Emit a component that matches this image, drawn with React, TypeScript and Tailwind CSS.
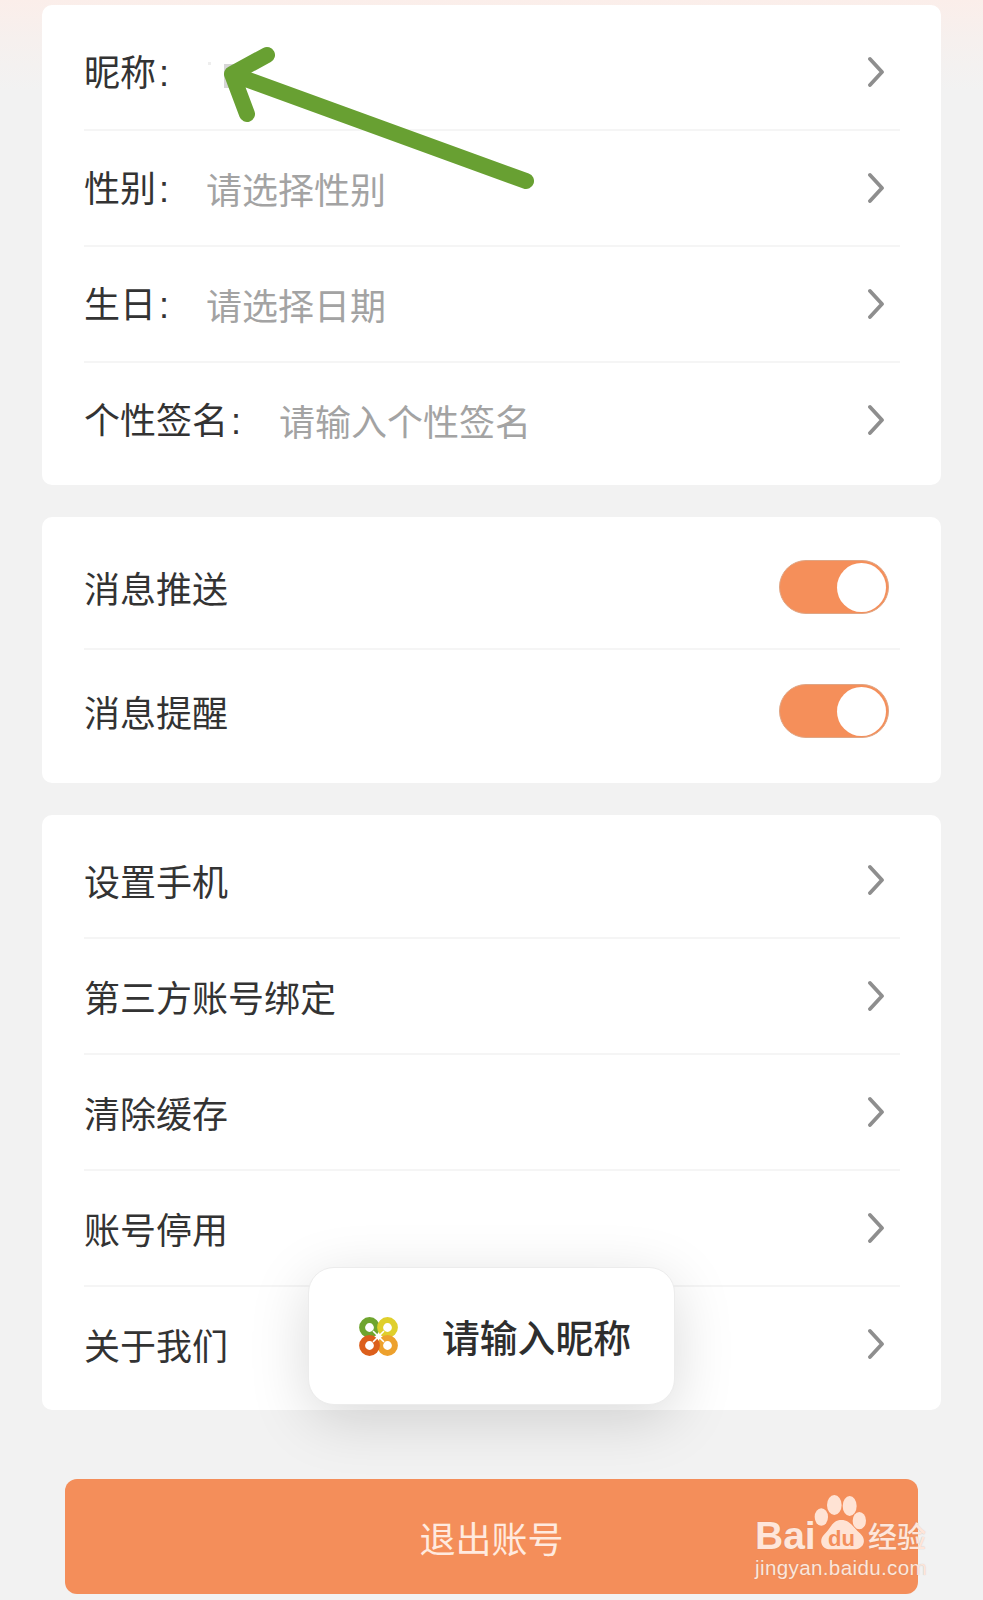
const infoRows = [
  { label: '昵称', width: 'w-[122px]', placeholder: '' },
  { label: '性别', width: 'w-[122px]', placeholder: '请选择性别' },
  { label: '生日', width: 'w-[122px]', placeholder: '请选择日期' },
  { label: '个性签名', width: 'w-[195px]', placeholder: '请输入个性签名' },
];

const switchRows = ['消息推送', '消息提醒'];

const linkRows = ['设置手机', '第三方账号绑定', '清除缓存', '账号停用', '关于我们'];

function Chevron() {
  return (
    <svg width="16" height="32" viewBox="0 0 16 32" fill="none" className="mr-[16px] shrink-0">
      <path d="M2 3 L14 16 L2 29" stroke="#8e8e8e" strokeWidth="3.8" strokeLinecap="round" strokeLinejoin="round" />
    </svg>
  );
}

function Toggle() {
  return (
    <div className="mr-[11px] flex h-[54px] w-[110px] items-center justify-end rounded-full border-[1.5px] border-[#dfa685] bg-[#f58f5a] pr-[2px]">
      <div className="h-[49px] w-[49px] rounded-full bg-white" />
    </div>
  );
}

function Logo() {
  return (
    <svg width="39" height="39" viewBox="0 0 39 39" fill="none" className="shrink-0">
      <circle cx="10.5" cy="10.5" r="7.4" stroke="#6fa52f" strokeWidth="6" />
      <circle cx="28.5" cy="10.5" r="7.4" stroke="#dfcf2c" strokeWidth="6" />
      <circle cx="28.5" cy="28.5" r="7.4" stroke="#eda12d" strokeWidth="6" />
      <circle cx="10.5" cy="28.5" r="7.4" stroke="#dc5f1c" strokeWidth="6" />
      <path d="M14 14 L25 25 M25 14 L14 25" stroke="#fff" strokeWidth="1.6" />
    </svg>
  );
}

function Watermark() {
  return (
    <div className="absolute left-[720px] top-[1460px] h-[140px] w-[263px] text-[#ffe6da] [text-shadow:0_0_1px_rgba(130,130,130,0.45)]">
      <svg width="263" height="140" viewBox="0 0 789 420" className="absolute left-0 top-0">
        <ellipse cx="343" cy="135" rx="22" ry="30" fill="#ffe3d4" />
        <ellipse cx="389" cy="138" rx="21" ry="30" fill="#ffe3d4" />
        <ellipse cx="304" cy="171" rx="20" ry="26" fill="#ffe3d4" />
        <ellipse cx="418" cy="182" rx="20" ry="26" fill="#ffe3d4" />
        <path d="M364 180 C392 180 400 204 420 220 C444 242 428 270 400 268 L334 268 C304 270 294 240 314 222 C332 206 336 180 364 180 Z" fill="#ffe3d4" />
      </svg>
      <div className="absolute left-[35px] top-[54px] font-['Liberation_Sans',sans-serif] text-[39px] font-bold leading-[44px]">
        Bai
      </div>
      <div className="absolute left-[108px] top-[66px] font-['Liberation_Sans',sans-serif] text-[22px] font-bold leading-[26px] text-[#f48e5a] [text-shadow:none]">
        du
      </div>
      <div className="absolute left-[148px] top-[57px] font-['Noto_Sans_CJK_SC',sans-serif] text-[29px] font-medium leading-[36px]">
        经验
      </div>
      <div className="absolute left-[35px] top-[93px] font-['Liberation_Sans',sans-serif] text-[20.5px] leading-[30px] tracking-[0.4px]">
        jingyan.baidu.com
      </div>
    </div>
  );
}

export default function App() {
  return (
    <div className="relative h-[1600px] w-[983px] overflow-hidden bg-[linear-gradient(#fbeeea_0px,#f6f0ee_40px,#f2f2f2_90px)] px-[42px] pt-[5px] font-['Noto_Sans_CJK_SC',sans-serif] text-[36px] text-[#333]">
      <div className="rounded-[10px] bg-white pb-[6px] pl-[42px] pr-[41px] pt-[10px]">
        {infoRows.map((row, index) => (
          <div
            key={row.label}
            className={`flex h-[116px] items-center justify-between border-b-2 ${index < infoRows.length - 1 ? 'border-[#f5f5f5]' : 'border-transparent'}`}
          >
            <div className="flex items-center">
              <span className={row.width}>
                {row.label}
                <span className="ml-[3px] font-['Liberation_Sans',sans-serif]">:</span>
              </span>
              <span className="text-[#a3a3a3]">{row.placeholder}</span>
            </div>
            <Chevron />
          </div>
        ))}
      </div>

      <div className="mt-[32px] rounded-[10px] bg-white py-[9px] pl-[42px] pr-[41px]">
        {switchRows.map((label, index) => (
          <div
            key={label}
            className={`flex h-[124px] items-center justify-between border-b-2 ${index === 0 ? 'border-[#f5f5f5]' : 'border-transparent'}`}
          >
            <span>{label}</span>
            <Toggle />
          </div>
        ))}
      </div>

      <div className="mt-[32px] rounded-[10px] bg-white pb-[7px] pl-[42px] pr-[41px] pt-[8px]">
        {linkRows.map((label, index) => (
          <div
            key={label}
            className={`flex h-[116px] items-center justify-between border-b-2 ${index < linkRows.length - 1 ? 'border-[#f5f5f5]' : 'border-transparent'}`}
          >
            <span>{label}</span>
            <Chevron />
          </div>
        ))}
      </div>

      <div className="mx-[23px] mt-[69px] flex h-[115px] items-center justify-center rounded-[12px] bg-[#f48e5a] text-[#ffeadf]">
        退出账号
      </div>

      {/* blurred nickname hidden by the annotation */}
      <div className="absolute left-[208px] top-[62px] h-[3px] w-[3px] bg-[#eeeeee]" />
      <div className="absolute left-[224px] top-[64px] h-[24px] w-[14px] bg-[#d6d6d6]" />

      {/* green annotation arrow */}
      <svg width="983" height="200" viewBox="0 0 983 200" fill="none" className="absolute left-0 top-0">
        <path
          d="M526 181 L232 74 M267 55 L232 74 L247 114"
          stroke="#68a032"
          strokeWidth="16"
          strokeLinecap="round"
          strokeLinejoin="round"
        />
      </svg>

      {/* toast */}
      <div className="absolute left-[308px] top-[1267px] flex h-[138px] w-[367px] items-center rounded-[26px] border border-[#ececec] bg-white pl-[50px] shadow-[0_14px_60px_rgba(0,0,0,0.15)]">
        <Logo />
        <span className="ml-[44px] text-[37.8px] font-medium leading-none text-[#2e2e2e]">请输入昵称</span>
      </div>

      <Watermark />
    </div>
  );
}
